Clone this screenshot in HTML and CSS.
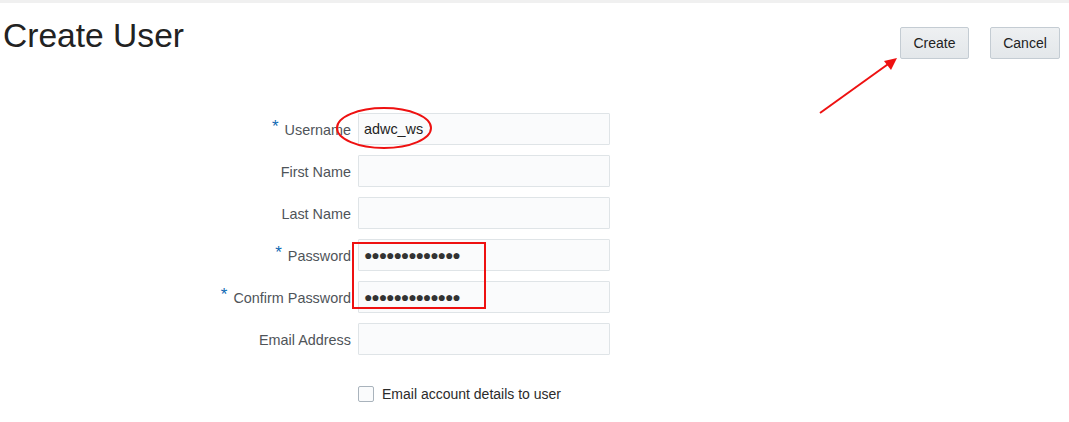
FILE: index.html
```html
<!DOCTYPE html>
<html>
<head>
<meta charset="utf-8">
<link rel="stylesheet" href="styles.css">
</head>
<body>
<div class="topbar"></div>
<div class="page">
  <header class="header">
    <h1 class="title">Create User</h1>
    <div class="actions">
      <button class="btn">Create</button>
      <button class="btn">Cancel</button>
    </div>
  </header>
  <form class="form">
    <label class="lbl"><span class="req">*</span>Username</label>
    <div class="field">adwc_ws</div>
    <label class="lbl">First Name</label>
    <div class="field"></div>
    <label class="lbl">Last Name</label>
    <div class="field"></div>
    <label class="lbl"><span class="req">*</span>Password</label>
    <div class="field dots">●●●●●●●●●●●●●</div>
    <label class="lbl"><span class="req">*</span>Confirm Password</label>
    <div class="field dots">●●●●●●●●●●●●●</div>
    <label class="lbl">Email Address</label>
    <div class="field"></div>
    <div class="spacer"></div>
    <div class="check"><span class="box"></span><span>Email account details to user</span></div>
  </form>
</div>
<svg class="annot" width="1069" height="422" viewBox="0 0 1069 422">
  <ellipse cx="384" cy="128" rx="47" ry="20" fill="none" stroke="#ee1111" stroke-width="2"/>
  <rect x="353" y="243" width="132" height="65" fill="none" stroke="#ee1111" stroke-width="2"/>
  <line x1="820" y1="113" x2="891" y2="62" stroke="#ee1111" stroke-width="2"/>
  <polygon points="897,58 884,61 891,70" fill="#ee1111"/>
</svg>
</body>
</html>
```
FILE: styles.css
```css
html, body { margin: 0; padding: 0; background: #fff; }
body { font-family: "Liberation Sans", Arial, sans-serif; width: 1069px; height: 422px; overflow: hidden; position: relative; }
.topbar { height: 3px; background: #f0f0f0; }
.page { padding: 0 9px 0 3px; }
.header { display: flex; justify-content: space-between; align-items: flex-start; }
.title { margin: 13px 0 0 0; font-size: 33.6px; font-weight: normal; color: #222; line-height: 40px; }
.actions { display: flex; gap: 21px; margin-top: 24px; }
.btn { height: 32px; padding: 0 12px; font-family: "Liberation Sans", Arial, sans-serif; font-size: 14px; color: #222; background: linear-gradient(#eef0f2, #e3e7ea); border: 1px solid #c4ccd3; border-radius: 2px; }
.btn:first-child { width: 69px; }
.btn:last-child { width: 70px; }
.form { display: grid; grid-template-columns: 348px 252px; column-gap: 7px; row-gap: 10px; margin-top: 54px; }
.lbl { display: flex; align-items: center; justify-content: flex-end; font-size: 14.4px; color: #4f5459; height: 32px; padding-top: 2px; box-sizing: border-box; }
.req { color: #0f6ab4; font-size: 17px; margin-right: 6px; position: relative; top: -3px; }
.field { height: 30px; border: 1px solid #dfe4e7; background: #fafbfc; border-radius: 1px; font-size: 14.4px; color: #222; display: flex; align-items: center; padding-left: 5px; }
.dots { font-size: 14px; letter-spacing: -1.1px; color: #333; }
.spacer { height: 9px; grid-column: 1 / 3; }
.check { grid-column: 2; display: flex; align-items: center; gap: 8px; font-size: 14px; color: #2b2b2b; height: 20px; }
.box { width: 14px; height: 14px; border: 1px solid #a9b3bc; border-radius: 2px; background: #fafbfc; }
.annot { position: absolute; left: 0; top: 0; pointer-events: none; }
```
